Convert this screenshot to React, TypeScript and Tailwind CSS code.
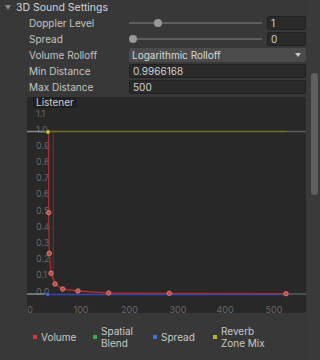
import React from 'react';

const font = { fontFamily: 'Inter, "Noto Sans", sans-serif' };

const SliderRow = ({ label, knob, value }: { label: string; knob: number; value: string }) => (
    <div className="flex h-[16px] items-center">
        <div className="shrink-0 text-[10px] text-[#c4c4c4] whitespace-nowrap" style={{ width: 100, paddingLeft: 29, boxSizing: 'content-box' }}>{label}</div>
        <div className="relative h-[16px] w-[133px] shrink-0">
            <div className="absolute left-0 right-0 top-[7px] h-[2px] bg-[#5e5e5e]" />
            <div className="absolute top-[4px] h-[8px] w-[8px] rounded-full bg-[#999999]" style={{ left: knob - 4 }} />
        </div>
        <div className="ml-[5px] flex h-[14px] w-[39px] items-center rounded-[2px] border border-[#212121] bg-[#2a2a2a] pl-[3px] text-[10px] text-[#d2d2d2]">
            {value}
        </div>
    </div>
);

const FieldRow = ({ label, value }: { label: string; value: string }) => (
    <div className="flex h-[16px] items-center">
        <div className="shrink-0 text-[10px] text-[#c4c4c4] whitespace-nowrap" style={{ width: 100, paddingLeft: 29, boxSizing: 'content-box' }}>{label}</div>
        <div className="flex h-[14px] w-[177px] items-center rounded-[2px] border border-[#212121] bg-[#2a2a2a] pl-[3px] text-[10px] text-[#d2d2d2]">
            {value}
        </div>
    </div>
);

const curve: [number, number][] = [
    [48.7, 132], [48.7, 212.7], [49.3, 253.3], [51, 273.3], [55, 284], [62.7, 289],
    [78, 291], [108.7, 293], [169.3, 293.3], [286, 293.7],
];

const Graph = () => {
    const yLabels = ['0.0', '0.1', '0.2', '0.3', '0.4', '0.5', '0.6', '0.7', '0.8', '0.9', '1.0', '1.1'];
    const xLabels: [string, number][] = [['0', 30], ['100', 81], ['200', 129.5], ['300', 178], ['400', 225], ['500', 274]];
    return (
        <div className="relative ml-[27px] mt-[2px] h-[216px] w-[279px] overflow-hidden rounded-[3px] bg-[#282828]">
            <svg width="279" height="216" viewBox="27 97 279 216" className="block">
                {yLabels.map((l, k) => (
                    <text key={l} x="36" y={291.3 - 16.2 * k + 3.3 + (k === 11 ? 1 : 0)} fontSize="9" fill="#686868" fontFamily="Inter, sans-serif">{l}</text>
                ))}
                {xLabels.map(([l, x]) => (
                    <text key={l} x={x} y="312.5" fontSize="9" fill="#686868" textAnchor="middle" fontFamily="Inter, sans-serif">{l}</text>
                ))}
                <line x1="27" y1="131.5" x2="48" y2="131.5" stroke="#8a8a8a" strokeWidth="1.3" />
                <line x1="287" y1="131.5" x2="306" y2="131.5" stroke="#5a5a5a" strokeWidth="1.3" />
                <line x1="48" y1="131.5" x2="287" y2="131.5" stroke="#75721f" strokeWidth="1.5" />
                <line x1="27" y1="294" x2="48" y2="294" stroke="#8a8a8a" strokeWidth="1.3" />
                <line x1="287" y1="294" x2="306" y2="294" stroke="#5a5a5a" strokeWidth="1.3" />
                <line x1="48" y1="294.5" x2="287" y2="294.5" stroke="#3a45b0" strokeWidth="1.5" />
                <path d="M53.3 132 L53.3 276 Q54 282 57 285" fill="none" stroke="#7c2626" strokeWidth="1.2" />
                <polyline points={curve.map(p => p.join(',')).join(' ')} fill="none" stroke="#a83030" strokeWidth="1.3" />
                {curve.slice(1).map(([x, y], i) => (
                    <circle key={i} cx={x} cy={y} r="2.2" fill="#c04848" stroke="#f08a7a" strokeWidth="0.8" />
                ))}
                <circle cx="48" cy="132" r="2.4" fill="#c8c43a" stroke="#2a2a10" strokeWidth="0.8" />
                <circle cx="47.7" cy="294.3" r="2.2" fill="#4a68e0" stroke="#20284a" strokeWidth="0.8" />
            </svg>
            <div className="absolute left-[6px] top-0 flex h-[11px] items-center rounded-b-[2px] bg-[#1f1f1f] px-[3px] text-[10px] leading-[11px] text-[#d0d0d0]">
                Listener
            </div>
        </div>
    );
};

const Legend = () => {
    const items: [string, string[]][] = [
        ['#d23a3a', ['Volume']],
        ['#3aae3a', ['Spatial', 'Blend']],
        ['#3a78d6', ['Spread']],
        ['#b6b636', ['Reverb', 'Zone Mix']],
    ];
    return (
        <div className="ml-[33px] mt-[12px] flex">
            {items.map(([c, lines]) => (
                <div key={lines[0]} className="flex w-[60px] items-center">
                    <div className="h-[4px] w-[4px] shrink-0" style={{ backgroundColor: c }} />
                    <div className="ml-[4px] text-[10px] leading-[12px] text-[#c8c8c8]">
                        {lines.map(l => <div key={l} className="whitespace-nowrap">{l}</div>)}
                    </div>
                </div>
            ))}
        </div>
    );
};

export default function App() {
    return (
        <div className="flex h-[360px] w-[320px] overflow-hidden bg-[#383838]" style={font}>
            <div className="w-[307px] shrink-0">
                <div className="flex h-[15px] items-center">
                    <svg width="16" height="15" viewBox="0 0 16 15">
                        <path d="M5 5 L11 5 L8 10 Z" fill="#8a8a8a" />
                    </svg>
                    <span className="text-[10.5px] text-[#d4d4d4]">3D Sound Settings</span>
                </div>
                <SliderRow label="Doppler Level" knob={29} value="1" />
                <SliderRow label="Spread" knob={4} value="0" />
                <div className="flex h-[16px] items-center">
                    <div className="shrink-0 text-[10px] text-[#c4c4c4] whitespace-nowrap" style={{ width: 100, paddingLeft: 29, boxSizing: 'content-box' }}>Volume Rolloff</div>
                    <div className="flex h-[14px] w-[177px] items-center justify-between rounded-[2px] bg-[#4b4b4b] pl-[3px] pr-[5px] text-[10px] text-[#dadada]">
                        <span>Logarithmic Rolloff</span>
                        <svg width="6" height="4" viewBox="0 0 6 4"><path d="M0 0 L6 0 L3 4 Z" fill="#c8c8c8" /></svg>
                    </div>
                </div>
                <FieldRow label="Min Distance" value="0.9966168" />
                <FieldRow label="Max Distance" value="500" />
                <Graph />
                <Legend />
            </div>
            <div className="flex-1 bg-[#3a3a3a] pt-[73px] pl-[4px]">
                <div className="h-[122px] w-[7px] rounded-[3px] bg-[#5f5f5f]" />
            </div>
        </div>
    );
}
